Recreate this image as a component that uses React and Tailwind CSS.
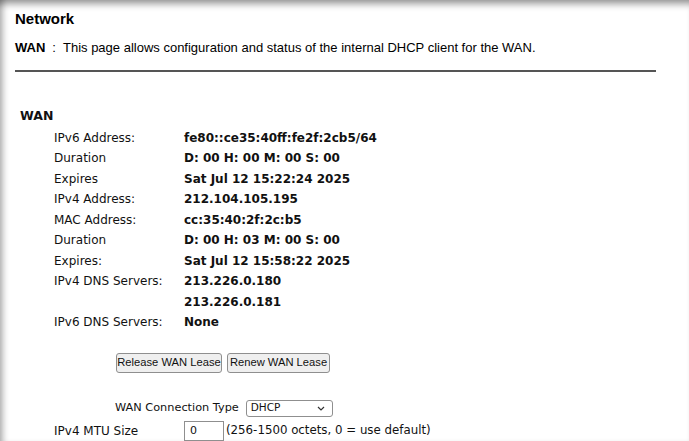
const rows = [
  ['IPv6 Address:', 'fe80::ce35:40ff:fe2f:2cb5/64'],
  ['Duration', 'D: 00 H: 00 M: 00 S: 00'],
  ['Expires', 'Sat Jul 12 15:22:24 2025'],
  ['IPv4 Address:', '212.104.105.195'],
  ['MAC Address:', 'cc:35:40:2f:2c:b5'],
  ['Duration', 'D: 00 H: 03 M: 00 S: 00'],
  ['Expires:', 'Sat Jul 12 15:58:22 2025'],
  ['IPv4 DNS Servers:', '213.226.0.180'],
  ['', '213.226.0.181'],
  ['IPv6 DNS Servers:', 'None'],
];

const verdana = "font-['DejaVu_Sans',Verdana,sans-serif]";
const tahoma = "font-['Liberation_Sans',Arial,sans-serif]";

export default function App() {
  return (
    <div className="min-h-[441px] w-full bg-white text-black shadow-[inset_0_9px_7px_-5px_rgba(0,0,0,0.4),inset_7px_0_6px_-4px_rgba(0,0,0,0.3)] overflow-hidden">
      <div className="pl-[15px] pt-[10px]">
        <h1 className={`${tahoma} text-[15px] font-bold leading-[18px]`}>Network</h1>
        <p className={`${tahoma} mt-[12px] text-[13px] leading-[16px]`}>
          <span className="font-bold">WAN</span>
          <span className="px-[7px]">:</span>
          This page allows configuration and status of the internal DHCP client for the WAN.
        </p>
        <div className="mt-[14px] h-[1.5px] w-[641px] bg-[#555]" />
      </div>

      <div className={`${verdana} text-[12px] text-[#111]`}>
        <div className="mt-[36px] pl-[20px] font-bold text-[12.5px] leading-[16px]">WAN</div>
        <div className="mt-[4px] pl-[54px]">
          {rows.map(([label, value], i) => (
            <div key={i} className="flex h-[20.5px] items-center">
              <span className="w-[130px] shrink-0">{label}</span>
              <span className="font-bold">{value}</span>
            </div>
          ))}
        </div>

        <div className={`${tahoma} mt-[20px] flex gap-[5px] pl-[116px] text-[11.2px]`}>
          <button className="h-[20px] w-[106px] whitespace-nowrap rounded-[3px] border border-[#8f8f8f] bg-[#efefef] px-0 leading-none">
            Release WAN Lease
          </button>
          <button className="h-[20px] w-[103px] whitespace-nowrap rounded-[3px] border border-[#8f8f8f] bg-[#efefef] px-0 leading-none">
            Renew WAN Lease
          </button>
        </div>

        <div className="mt-[27px] flex items-center pl-[115px]">
          <span className="text-[11.3px]">WAN Connection Type</span>
          <div className="ml-[7px] flex h-[17px] w-[87px] items-center justify-between rounded-[3px] border border-[#8f8f8f] bg-white pl-[4px] pr-[7px]">
            <span className="text-[10.5px]">DHCP</span>
            <svg width="8" height="5" viewBox="0 0 8 5" fill="none">
              <path d="M1 1l3 3 3-3" stroke="#333" strokeWidth="1.2" />
            </svg>
          </div>
        </div>

        <div className="mt-[4px] flex items-center pl-[54px]">
          <span className="w-[130px] shrink-0">IPv4 MTU Size</span>
          <input
            defaultValue="0"
            className="h-[20px] w-[40px] border border-[#8f8f8f] bg-white px-[5px] text-[11px] outline-none"
          />
          <span className="ml-[2px] text-[11.8px]">(256-1500 octets, 0 = use default)</span>
        </div>
      </div>
    </div>
  );
}
